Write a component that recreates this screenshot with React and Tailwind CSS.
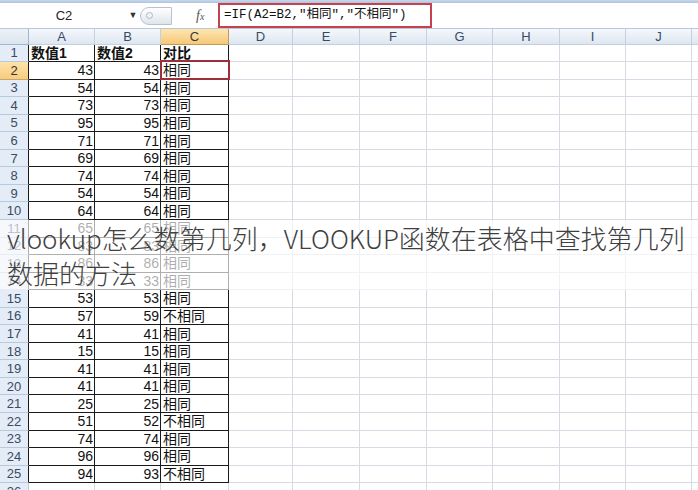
import React from "react";

const rows = [
  [1, "数值1", "数值2", "对比"],
  [2, "43", "43", "相同"],
  [3, "54", "54", "相同"],
  [4, "73", "73", "相同"],
  [5, "95", "95", "相同"],
  [6, "71", "71", "相同"],
  [7, "69", "69", "相同"],
  [8, "74", "74", "相同"],
  [9, "54", "54", "相同"],
  [10, "64", "64", "相同"],
  [11, "65", "65", "相同"],
  [12, "83", "83", "相同"],
  [13, "86", "86", "相同"],
  [14, "33", "33", "相同"],
  [15, "53", "53", "相同"],
  [16, "57", "59", "不相同"],
  [17, "41", "41", "相同"],
  [18, "15", "15", "相同"],
  [19, "41", "41", "相同"],
  [20, "41", "41", "相同"],
  [21, "25", "25", "相同"],
  [22, "51", "52", "不相同"],
  [23, "74", "74", "相同"],
  [24, "96", "96", "相同"],
  [25, "94", "93", "不相同"],
  [26, "", "", ""],
];

const letters = ["A", "B", "C", "D", "E", "F", "G", "H", "I", "J"];

const GRID =
  "grid grid-cols-[29px_66px_66px_68px_64px_67px_67px_66px_67px_66px_66px_1fr]";

function ColumnHeader() {
  return (
    <div className={`${GRID} h-[16.5px] border-t border-[#b9c7d8]`}>
      <div className="bg-gradient-to-b from-[#eef2f7] to-[#dbe4ef] border-r border-b border-[#9eb6ce]" />
      {letters.map((l) => (
        <div
          key={l}
          className={
            l === "C"
              ? "flex items-center justify-center bg-gradient-to-b from-[#fde6b0] to-[#f6c877] border-r border-b border-[#c29a5b] text-[13px] leading-none text-[#3b3b3b]"
              : "flex items-center justify-center bg-gradient-to-b from-[#f5f8fc] to-[#dde6f1] border-r border-b border-[#c3d0e0] text-[13px] leading-none text-[#3a4a63]"
          }
        >
          {l}
        </div>
      ))}
      <div className="bg-gradient-to-b from-[#f5f8fc] to-[#dde6f1] border-b border-[#c3d0e0]" />
    </div>
  );
}

function Row({ n, a, b, c }) {
  const inTable = n <= 25;
  const head = n === 1;
  const selected = n === 2;
  return (
    <div className={`${GRID} h-[17.55px]`}>
      <div
        className={
          selected
            ? "flex items-center justify-center bg-gradient-to-b from-[#fde3a8] to-[#f7cc7f] border-r border-b border-r-[#1a1a1a] border-b-[#c9a56a] text-[13px] leading-none text-[#333]"
            : inTable
            ? "flex items-center justify-center bg-[#e4ecf7] border-r border-b border-r-[#1a1a1a] border-b-[#b9c9dc] text-[13px] leading-none text-[#3a4a63]"
            : "flex items-center justify-center bg-[#e4ecf7] border-r border-b border-[#b9c9dc] text-[13px] leading-none text-[#3a4a63]"
        }
      >
        {n}
      </div>
      {inTable ? (
        <>
          <div
            className={
              head
                ? "flex items-center pl-[2px] border-r border-b border-[#1a1a1a] text-[14px] font-bold leading-none text-[#111]"
                : "flex items-center justify-end pr-[1px] border-r border-b border-[#1a1a1a] text-[14px] leading-none text-[#111]"
            }
          >
            {a}
          </div>
          <div
            className={
              head
                ? "flex items-center pl-[2px] border-r border-b border-[#1a1a1a] text-[14px] font-bold leading-none text-[#111]"
                : "flex items-center justify-end pr-[1px] border-r border-b border-[#1a1a1a] text-[14px] leading-none text-[#111]"
            }
          >
            {b}
          </div>
          <div
            className={
              head
                ? "flex items-center pl-[2px] border-r border-b border-[#1a1a1a] text-[14px] font-bold leading-none text-[#111]"
                : "relative flex items-center pl-[2px] border-r border-b border-[#1a1a1a] text-[14px] leading-none text-[#111]"
            }
          >
            {c}
            {selected && (
              <div className="absolute -left-[1px] -top-[2px] -right-[2px] -bottom-[1px] border-2 border-[#9e2f38]" />
            )}
          </div>
        </>
      ) : (
        <>
          <div className="border-r border-b border-[#d5dae3]" />
          <div className="border-r border-b border-[#d5dae3]" />
          <div className="border-r border-b border-[#d5dae3]" />
        </>
      )}
      {letters.slice(3).map((l) => (
        <div key={l} className="border-r border-b border-[#d5dae3]" />
      ))}
      <div className="border-b border-[#d5dae3]" />
    </div>
  );
}

function FormulaBar() {
  return (
    <div className="flex h-[25px] items-center bg-white">
      <div className="flex h-full w-[128px] items-center justify-center text-[13px] text-[#222]">
        C2
      </div>
      <div className="flex h-full w-[10px] items-center justify-center text-[9px] text-[#333]">
        ▼
      </div>
      <div className="ml-[2px] flex h-[18px] w-[32px] items-center rounded-l-full border border-[#b8c2cf] bg-gradient-to-b from-[#ffffff] to-[#dfe5ec] pl-[5px]">
        <div className="h-[7px] w-[7px] rounded-full border border-[#b0b8c4]" />
      </div>
      <div className="ml-[24px] w-[18px] font-['Liberation_Serif'] text-[14px] italic text-[#555]">
        f<span className="text-[10px]">x</span>
      </div>
      <div className="ml-[4px] flex h-[25px] w-[214px] items-center border-2 border-[#c4414d] pl-[4px] font-['Liberation_Mono','Noto_Sans_CJK_SC',monospace] text-[12.5px] leading-none text-[#111]">
        =IF(A2=B2,"相同","不相同")
      </div>
    </div>
  );
}

export default function App() {
  return (
    <div className="relative h-[490px] w-[698px] overflow-hidden bg-white font-['Liberation_Sans','Noto_Sans_CJK_SC',sans-serif]">
      <div className="h-[3px] bg-gradient-to-b from-[#c9d9ec] to-[#adc4df]" />
      <FormulaBar />
      <ColumnHeader />
      {rows.map(([n, a, b, c]) => (
        <Row key={n} n={n} a={a} b={b} c={c} />
      ))}

      {/* Caption band laid over rows 11–14 */}
      <div className="absolute left-0 right-0 top-[220px] h-[70px] bg-white/65 pl-[7px] font-['Noto_Sans_CJK_SC',sans-serif] text-[26px] font-light leading-[35px] text-[#404040] whitespace-nowrap">
        vlookup怎么数第几列，VLOOKUP函数在表格中查找第几列
        <br />
        数据的方法
      </div>
    </div>
  );
}
